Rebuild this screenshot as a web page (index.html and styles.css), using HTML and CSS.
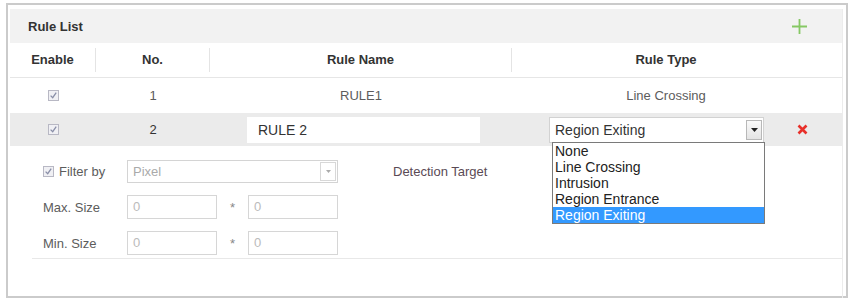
FILE: index.html
```html
<!DOCTYPE html>
<html lang="en">
<head>
    <meta charset="UTF-8">
    <title>Rule List</title>
    <link rel="stylesheet" href="styles.css">
</head>
<body>
<div class="frame">
    <div class="panel">
        <div class="panel-head">
            <span class="panel-title">Rule List</span>
            <svg class="add" width="15" height="15" viewBox="0 0 15 15"><path d="M7.5 0v15M0 7.5h15" stroke="#86c864" stroke-width="1.8"/></svg>
        </div>

        <div class="row row-head">
            <div class="cell c-enable">Enable</div>
            <div class="cell c-no">No.</div>
            <div class="cell c-name">Rule Name</div>
            <div class="cell c-type">Rule Type</div>
        </div>

        <div class="row">
            <div class="cell c-enable">
                <svg class="check" width="11" height="11" viewBox="0 0 11 11"><rect x="0.5" y="0.5" width="10" height="10" fill="#f0f0f4" stroke="#b8b8c4"/><path d="M2.6 5.6l2.1 2.1 3.5-5" fill="none" stroke="#8a8fa8" stroke-width="1.3"/></svg>
            </div>
            <div class="cell c-no">1</div>
            <div class="cell c-name">RULE1</div>
            <div class="cell c-type">Line Crossing</div>
        </div>

        <div class="row row-edit">
            <div class="cell c-enable">
                <svg class="check" width="11" height="11" viewBox="0 0 11 11"><rect x="0.5" y="0.5" width="10" height="10" fill="#f0f0f4" stroke="#b8b8c4"/><path d="M2.6 5.6l2.1 2.1 3.5-5" fill="none" stroke="#8a8fa8" stroke-width="1.3"/></svg>
            </div>
            <div class="cell c-no no-edit">2</div>
            <div class="cell c-name cell-left">
                <div class="name-input">RULE 2</div>
            </div>
            <div class="cell c-type cell-left">
                <div class="select">
                    <span class="select-text">Region Exiting</span>
                    <span class="select-arrow"><svg width="7" height="4" viewBox="0 0 7 4"><path d="M0 0h7L3.5 4z" fill="#222"/></svg></span>
                    <ul class="options">
                        <li>None</li>
                        <li>Line Crossing</li>
                        <li>Intrusion</li>
                        <li>Region Entrance</li>
                        <li class="active">Region Exiting</li>
                    </ul>
                </div>
                <svg class="del" width="11" height="11" viewBox="0 0 11 11"><path d="M1.5 1.5l8 8M9.5 1.5l-8 8" stroke="#e8302a" stroke-width="2.6"/></svg>
            </div>
        </div>

        <div class="filter">
            <div class="frow">
                <span class="flabel">
                    <svg class="check" width="11" height="11" viewBox="0 0 11 11"><rect x="0.5" y="0.5" width="10" height="10" fill="#f0f0f4" stroke="#b8b8c4"/><path d="M2.6 5.6l2.1 2.1 3.5-5" fill="none" stroke="#8a8fa8" stroke-width="1.3"/></svg>
                    Filter by
                </span>
                <div class="fselect">
                    <span>Pixel</span>
                    <span class="farrow"><svg width="5" height="3" viewBox="0 0 5 3"><path d="M0 0h5L2.5 3z" fill="#aaa"/></svg></span>
                </div>
                <span class="target">Detection Target</span>
            </div>
            <div class="frow">
                <span class="flabel">Max. Size</span>
                <div class="finput">0</div>
                <span class="star">*</span>
                <div class="finput">0</div>
            </div>
            <div class="frow">
                <span class="flabel">Min. Size</span>
                <div class="finput">0</div>
                <span class="star">*</span>
                <div class="finput">0</div>
            </div>
        </div>
    </div>
</div>
</body>
</html>
```

FILE: styles.css
```css
*{
    margin: 0;
    padding: 0;
    list-style: none;
    box-sizing: border-box;
}
body{
    font-family: "Liberation Sans", Arial, sans-serif;
    font-size: 13px;
    color: #5c5c5c;
    background: #fff;
}
.frame{
    width: 842px;
    height: 295px;
    margin: 3px 0 0 6px;
    border: 2px solid #cbcbcb;
}
.panel{
    width: 833px;
    height: 100%;
    margin: 4px 0 0 2px;
    border-right: 1px solid #ececec;
}
.panel-head{
    height: 34px;
    background: #f2f2f2;
    padding: 0 35px 0 18px;
    display: flex;
    align-items: center;
    justify-content: space-between;
}
.panel-title{
    font-weight: bold;
    color: #333;
}
.row{
    display: flex;
    align-items: center;
    height: 35px;
}
.row-head{
    height: 35px;
    border-bottom: 1px solid #e6e6e6;
    font-weight: bold;
    color: #333;
}
.row-head .cell{
    height: 24px;
    line-height: 24px;
    border-right: 1px solid #e4e4e4;
}
.row-head .c-type{
    border-right: 0;
}
.cell{
    text-align: center;
    display: flex;
    align-items: center;
    justify-content: center;
}
.c-enable{ width: 86px; }
.c-no{ width: 114px; }
.c-name{ width: 302px; }
.c-type{ width: 308px; }
.check{
    display: block;
}
.row-edit{
    height: 33px;
    background: #ebebeb;
}
.no-edit{
    color: #333;
}
.cell-left{
    justify-content: flex-start;
}
.name-input{
    width: 233px;
    height: 26px;
    margin-left: 37px;
    background: #fff;
    padding-left: 11px;
    font-size: 14px;
    line-height: 26px;
    color: #333;
    text-align: left;
}
.select{
    position: relative;
    width: 215px;
    height: 26px;
    margin-left: 37px;
    background: #fff;
    border: 1px solid #d2d2d2;
    display: flex;
    align-items: center;
    justify-content: space-between;
    padding: 0 1px 0 5px;
    font-size: 14px;
    color: #333;
}
.select-arrow{
    width: 16px;
    height: 20px;
    border: 1px solid #b8b8b8;
    background: linear-gradient(#fafafa, #e4e4e4);
    display: flex;
    align-items: center;
    justify-content: center;
}
.options{
    position: absolute;
    left: 2px;
    top: 100%;
    width: 213px;
    background: #fff;
    border: 1px solid #7a7a7a;
    text-align: left;
    z-index: 2;
}
.options li{
    height: 16px;
    line-height: 16px;
    padding-left: 2px;
    color: #222;
}
.options li.active{
    background: #3399ff;
    color: #fff;
}
.del{
    margin-left: 33px;
}
.filter{
    margin-left: 22px;
    padding: 13px 0 3px 11px;
    border-bottom: 1px solid #e8e8e8;
    display: flex;
    flex-direction: column;
    gap: 12px;
}
.frow{
    display: flex;
    align-items: center;
    height: 24px;
}
.flabel{
    width: 84px;
    display: flex;
    align-items: center;
    gap: 5px;
}
.fselect{
    width: 211px;
    height: 23px;
    border: 1px solid #d4d4d4;
    display: flex;
    align-items: center;
    justify-content: space-between;
    padding: 0 1px 0 5px;
    color: #aaa;
}
.farrow{
    width: 16px;
    height: 19px;
    border: 1px solid #d8d8d8;
    display: flex;
    align-items: center;
    justify-content: center;
}
.target{
    margin-left: 55px;
    color: #5a4a55;
}
.finput{
    width: 90px;
    height: 24px;
    border: 1px solid #d6d6d6;
    padding-left: 5px;
    line-height: 22px;
    color: #bbb;
}
.star{
    width: 31px;
    text-align: center;
    color: #888;
}
```
